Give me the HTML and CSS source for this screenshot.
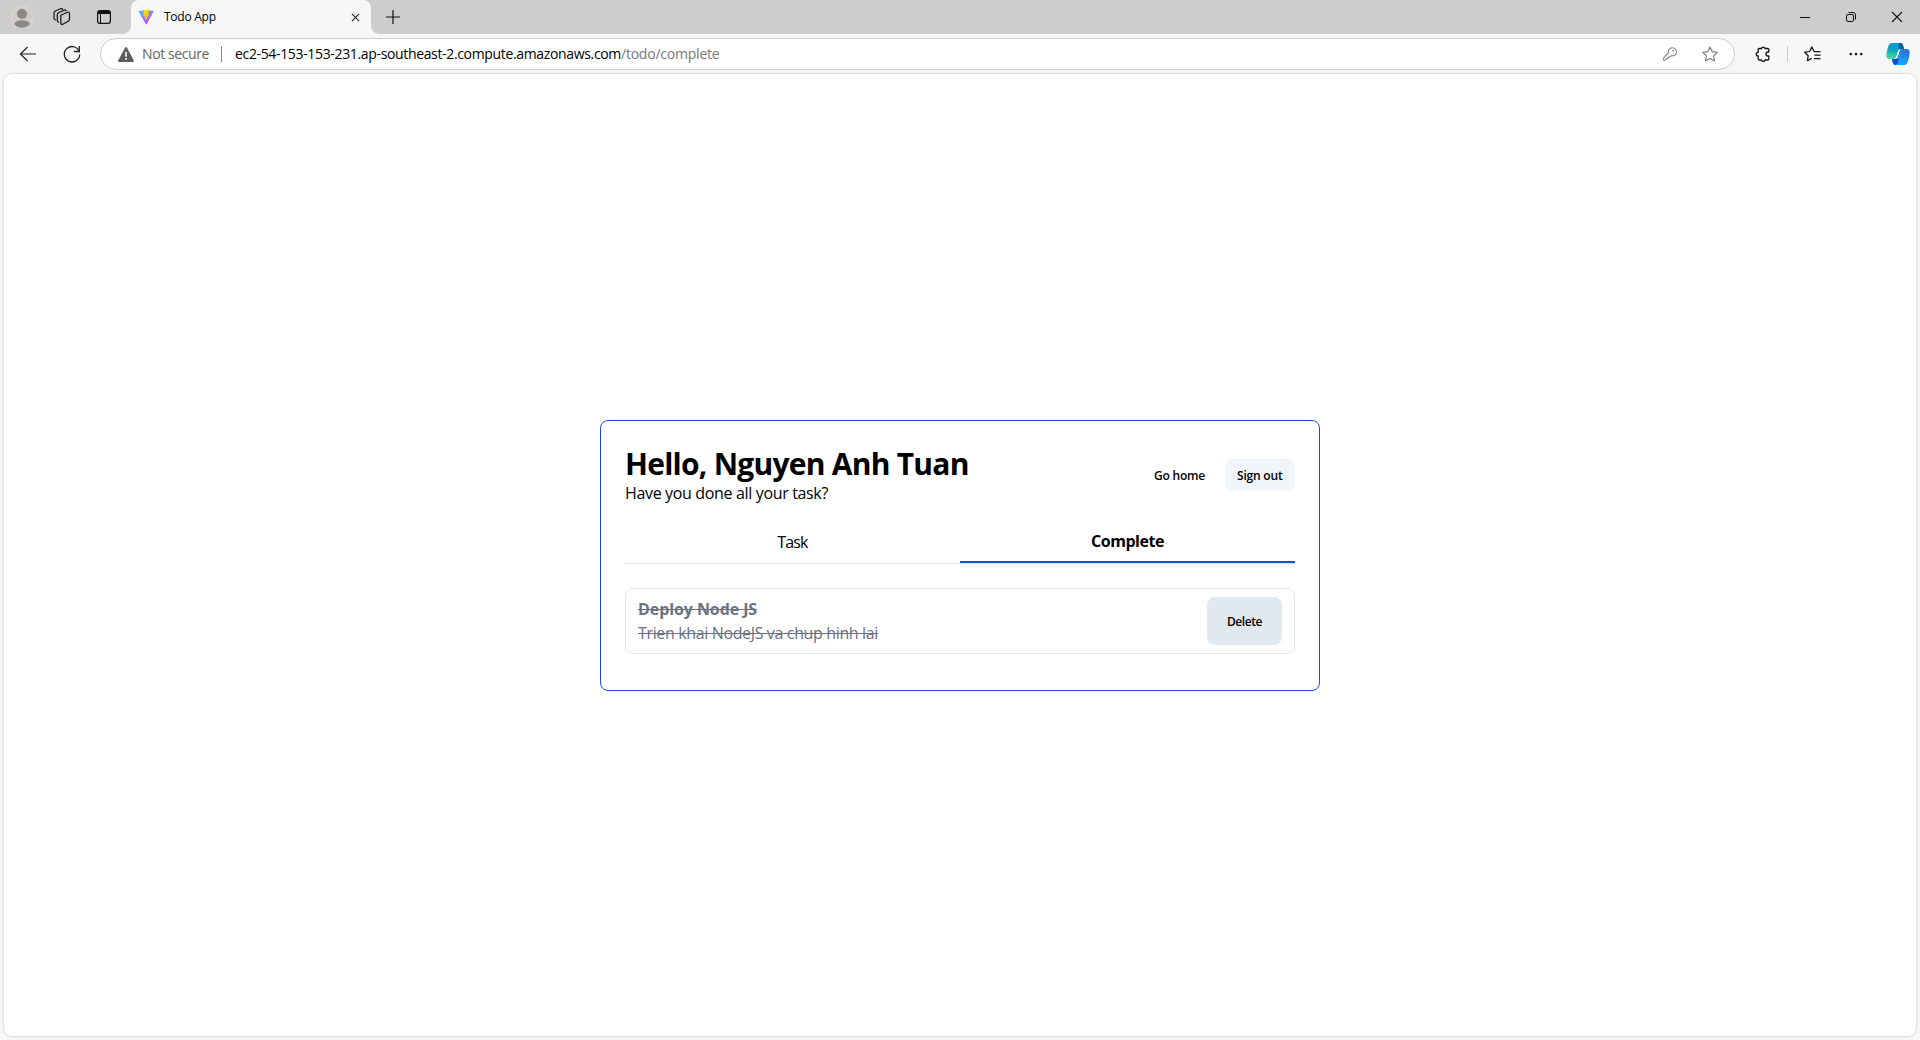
FILE: index.html
```
<!DOCTYPE html>
<html lang="en">
<head>
<meta charset="utf-8">
<title>Todo App</title>
<link rel="stylesheet" href="styles.css">
</head>
<body>
<header class="tabstrip">
  <svg class="avatar" viewBox="0 0 22 22"><circle cx="11" cy="11" r="10.500" fill="#d0cdc9" stroke="#dddad6"/><circle cx="11" cy="8" r="5" fill="#8d8885"/><path d="M3 18c2-5 14-5 16 0a10.500 10.500 0 0 1-16 0z" fill="#8d8885"/></svg>
  <svg class="workspaces" viewBox="0 0 18 18"><g fill="none" stroke="#111" stroke-width="1.200" stroke-linejoin="round" stroke-linecap="round"><path d="M7.800 7.200 14.500 4.200Q16.500 3.500 16.500 5.500V11q0 1.300-1 2L9.800 16.200Q7.800 17 7.800 15z"/><path d="M5.500 14.200Q4.300 14 4.300 12.500V7q0-1.500 1.200-2.200L11 2.200q1.500-.7 2.200.5"/><path d="M2.500 12Q1 11.700 1 10.300V5.200q0-1.500 1.200-2.200L7.500.8Q9 .3 9.800 1.300"/></g></svg>
  <svg class="tab-actions" viewBox="0 0 14 14"><rect x=".6" y=".6" width="12.800" height="12.800" rx="2.300" fill="none" stroke="#111" stroke-width="1.200"/><path d="M1 2.500Q1 1 2.500 1h9Q13 1 13 2.500V4H1z" fill="#111"/><path d="M3.500 4v9" stroke="#111"/></svg>
  <div class="tab">
    <svg class="favicon" viewBox="0 0 16 16"><defs><linearGradient id="vite" x1="0" y1="0" x2=".6" y2="1"><stop offset="0" stop-color="#41d1ff"/><stop offset="1" stop-color="#bd34fe"/></linearGradient><linearGradient id="bolt" x1="0" y1="0" x2="0" y2="1"><stop offset="0" stop-color="#ffdd35"/><stop offset="1" stop-color="#ffa800"/></linearGradient></defs><path d="M.2 2 8 .9 15.800 2 8.300 15.700z" fill="url(#vite)"/><path d="M11.300.2 5.700 1.300 5.300 7.300l1.600-.3-.5 2.600 1.400-.4-.8 4L11.500 5l-1.700.3z" fill="url(#bolt)"/></svg>
    <span class="tab-title">Todo App</span>
    <svg class="tab-close" viewBox="0 0 10 10"><path d="m1 1 8 8m0-8-8 8" stroke="#222" stroke-width="1.200"/></svg>
  </div>
  <svg class="new-tab" viewBox="0 0 14 14"><path d="M7 0v14M0 7h14" stroke="#111" stroke-width="1.200"/></svg>
  <div class="window-controls">
    <svg viewBox="0 0 12 12"><path d="M1 6.500h10" stroke="#111"/></svg>
    <svg viewBox="0 0 12 12"><g fill="none" stroke="#111"><rect x="1.500" y="3.500" width="7" height="7" rx="1.500"/><path d="M3.500 1.500H8q2.500 0 2.500 2.500v4.500"/></g></svg>
    <svg viewBox="0 0 12 12"><path d="m1 1 10 10M11 1 1 11" stroke="#111" stroke-width="1.100"/></svg>
  </div>
</header>
<nav class="toolbar">
  <svg class="back" viewBox="0 0 18 18"><path d="M17 9H1.500M8.500 2 1.500 9l7 7" fill="none" stroke="#222" stroke-width="1.200"/></svg>
  <svg class="reload" viewBox="0 0 18 18"><path d="M16.500 7.500A7.700 7.700 0 1 0 16.700 9.500M16.300 1v5.500h-5.500" fill="none" stroke="#222" stroke-width="1.300"/></svg>
  <div class="address">
    <svg class="warning" viewBox="0 0 16 15"><path d="M7 .7Q8 -.5 9 .7l6.700 12.500Q16.200 15 14.800 15H1.200Q-.2 15 .3 13.200z" fill="#5c5c5c"/><path d="M7.200 5h1.600v4.700H7.200zM7.200 11h1.600v1.700H7.200z" fill="#fff"/></svg>
    <span class="security">Not secure</span>
    <span class="divider"></span>
    <span class="url"><span class="host">ec2-54-153-153-231.ap-southeast-2.compute.amazonaws.com</span><span class="path">/todo/complete</span></span>
    <svg class="key" viewBox="0 0 14 14"><path d="M9.200.7a4.100 4.100 0 1 1-1.100 8L6.500 10H5.200v1.500H3.600L2 13.300H.7V10.700L5.400 6A4.100 4.100 0 0 1 9.200.7z" fill="none" stroke="#858585" stroke-width="1.100" stroke-linejoin="round"/><circle cx="10.300" cy="3.700" r=".9" fill="#858585"/></svg>
    <svg class="star" viewBox="0 0 16 16"><path d="m8 1 2.200 4.600 5 .7-3.600 3.600.9 5L8 12.600l-4.500 2.300.9-5L.8 6.300l5-.7z" fill="none" stroke="#777" stroke-width="1.100" stroke-linejoin="round"/></svg>
  </div>
  <svg class="extensions" viewBox="0 0 16 16"><path d="M4.500 2.500h2a1.800 1.800 0 0 1 3.500 0h2.500q1.300 0 1.300 1.300V6H13a2 2 0 0 0 0 4h.8v2.700q0 1.300-1.300 1.300H10a1.800 1.800 0 0 1-3.500 0h-2q-1.300 0-1.300-1.300V10H2.700a1.900 1.900 0 0 1 0-3.700h.5V3.800q0-1.300 1.300-1.300z" fill="none" stroke="#111" stroke-width="1.300" stroke-linejoin="round"/></svg>
  <span class="toolbar-divider"></span>
  <svg class="favorites" viewBox="0 0 17 16"><path d="M10.600 5.500 10 5.400 7.800 1 5.600 5.500.8 6.200 4.200 9.700l-.8 5 4.300-2.300M10 5.500h6.500M10.500 9h6M10 12.500h6.500" fill="none" stroke="#111" stroke-width="1.250" stroke-linejoin="round"/></svg>
  <svg class="more" viewBox="0 0 14 4"><g fill="#111"><circle cx="1.800" cy="2" r="1.300"/><circle cx="7" cy="2" r="1.300"/><circle cx="12.200" cy="2" r="1.300"/></g></svg>
  <svg class="copilot" viewBox="0 0 24 24"><defs><linearGradient id="cpa" x1=".5" y1="0" x2=".3" y2="1"><stop offset="0" stop-color="#0798d8"/><stop offset=".45" stop-color="#12a6bd"/><stop offset="1" stop-color="#4be092"/></linearGradient><linearGradient id="cpb" x1=".8" y1="0" x2=".4" y2="1"><stop offset="0" stop-color="#2e70d3"/><stop offset="1" stop-color="#17a9ff"/></linearGradient></defs><path d="M6 1h9q2 0 3 6h-3q-2 0-2.700 2L10.500 15q-.7 2-2.500 2H3.500Q0 17 .3 13 .8 8 2.500 3.500 3.500 1 6 1z" fill="url(#cpa)"/><path d="M13 1h2q2 0 3 6h-3q-1 0-2 1-1.500-4 0-7z" fill="#075f91"/><path d="M16 7h4.500q3.500 0 3.200 4-.5 5-2.200 9.500-1 2.500-3.500 2.500H9q-2 0-3-6h3q2 0 2.700-2L13.500 9q.7-2 2.500-2z" fill="url(#cpb)"/><path d="M6 17h3q1.500 0 2.500-1l1 2q-.5 5-3.500 5-2 0-3-6z" fill="#134bc9"/><path d="m12.500 8 2.200-1q-1.200 1-1.700 3l-1.500 5q-.5 1.500-2 2H8q1.500-.5 2.200-2z" fill="#fff"/></svg>
</nav>
<main class="viewport">
  <section class="card">
    <div class="card-header">
      <div>
        <h1 class="greeting">Hello, Nguyen Anh Tuan</h1>
        <p class="subtitle">Have you done all your task?</p>
      </div>
      <div class="actions">
        <a class="button ghost">Go home</a>
        <a class="button soft">Sign out</a>
      </div>
    </div>
    <div class="tabs">
      <a class="tab-link">Task</a>
      <a class="tab-link active">Complete</a>
    </div>
    <article class="item">
      <div class="item-text">
        <h2 class="item-title">Deploy Node JS</h2>
        <p class="item-note">Trien khai NodeJS va chup hinh lai</p>
      </div>
      <button class="delete">Delete</button>
    </article>
  </section>
</main>
</body>
</html>
```
FILE: styles.css
```
* { box-sizing: border-box; margin: 0; padding: 0; }
body { height: 100vh; display: flex; flex-direction: column; overflow: hidden; background: #f7f7f7; color: #000; font-family: "Open Sans", "Noto Sans", sans-serif; }
svg { display: block; flex: none; overflow: visible; }
.tabstrip { height: 34px; flex: none; display: flex; align-items: center; background: #cdcdcd; padding-left: 11px; }
.avatar { width: 22px; height: 22px; }
.workspaces { width: 18px; height: 18px; margin-left: 20px; }
.tab-actions { width: 14px; height: 14px; margin-left: 26px; }
.tab { position: relative; width: 240px; height: 34px; margin-left: 20px; padding: 0 11px 0 7px; display: flex; align-items: center; background: #f7f7f7; border-radius: 8px 8px 0 0; }
.tab::before, .tab::after { content: ""; position: absolute; bottom: 0; width: 8px; height: 8px; }
.tab::before { left: -8px; background: radial-gradient(circle at 0 0, transparent 7.500px, #f7f7f7 8px); }
.tab::after { right: -8px; background: radial-gradient(circle at 100% 0, transparent 7.500px, #f7f7f7 8px); }
.favicon { width: 16px; height: 16px; }
.tab-title { flex: 1; margin-left: 10px; font-size: 12px; line-height: 16px; letter-spacing: -0.25px; }
.tab-close { width: 9px; height: 9px; }
.new-tab { width: 14px; height: 14px; margin-left: 15px; }
.window-controls { display: flex; gap: 34px; margin-left: auto; padding-right: 17px; }
.window-controls svg { width: 12px; height: 12px; }
.toolbar { height: 40px; flex: none; display: flex; align-items: center; padding-left: 19px; }
.back { width: 18px; height: 18px; }
.reload { width: 18px; height: 18px; margin-left: 26px; }
.address { width: 1635px; height: 32px; margin-left: 19px; padding: 0 16px; display: flex; align-items: center; background: #fff; border: 1px solid #cdcdcd; border-radius: 16px; font-size: 14px; line-height: 20px; white-space: nowrap; }
.warning { width: 16px; height: 15px; margin-left: 1px; }
.security { width: 79px; margin-left: 8px; color: #666; letter-spacing: -0.4px; }
.divider { width: 1px; height: 16px; background: #888; }
.url { flex: 1; margin-left: 13px; }
.host { letter-spacing: -0.343px; }
.path { color: #777; letter-spacing: -0.22px; }
.key { width: 14px; height: 14px; margin-right: 25px; }
.star { width: 16px; height: 16px; }
.extensions { width: 16px; height: 16px; margin-left: 20px; }
.toolbar-divider { width: 1px; height: 16px; margin-left: 16px; background: #cdcdcd; }
.favorites { width: 17px; height: 16px; margin-left: 16px; }
.more { width: 14px; height: 4px; margin-left: 28px; }
.copilot { width: 24px; height: 24px; margin-left: 23px; }
.viewport { flex: 1; margin: 0 4px 4px; display: flex; align-items: flex-start; justify-content: center; padding-top: 346px; background: #fff; border-radius: 8px; box-shadow: 0 0 2px 1px #dcdcdc; }
.card { width: 720px; padding: 24px 24px 36px; border: 1px solid #1d4ed8; border-radius: 8px; font-size: 16px; line-height: 24px; }
.card-header { display: flex; align-items: center; justify-content: space-between; }
.greeting { padding-top: 1px; font-size: 30px; line-height: 35px; font-weight: 700; letter-spacing: -0.75px; }
.subtitle { letter-spacing: -0.343px; }
.actions { display: flex; gap: 8px; }
.button { height: 32px; padding: 0 12px; border-radius: 8px; font-size: 12px; line-height: 33px; font-weight: 600; letter-spacing: -0.2px; }
.soft { width: 70px; background: #f1f5f9; }
.tabs { display: flex; margin-top: 24px; border-bottom: 1px solid #e5e7eb; }
.tab-link { flex: 1; height: 34px; text-align: center; line-height: 26px; letter-spacing: -0.85px; }
.active { line-height: 24px; font-weight: 700; letter-spacing: -0.45px; border-bottom: 2px solid #1d4ed8; }
.item { display: flex; justify-content: space-between; margin-top: 24px; padding: 8px 12px; border: 1px solid #e5e7eb; border-radius: 8px; color: #6b7280; }
.item-title, .item-note { font-size: 16px; text-decoration: line-through; }
.item-title { font-weight: 700; letter-spacing: -0.08px; }
.item-note { font-weight: 400; letter-spacing: -0.359px; }
.delete { width: 75px; height: 48px; padding-top: 1px; border: 0; border-radius: 8px; background: #e2e8f0; color: #000; font: 600 12px/16px "Open Sans", "Noto Sans", sans-serif; letter-spacing: -0.4px; }
```
